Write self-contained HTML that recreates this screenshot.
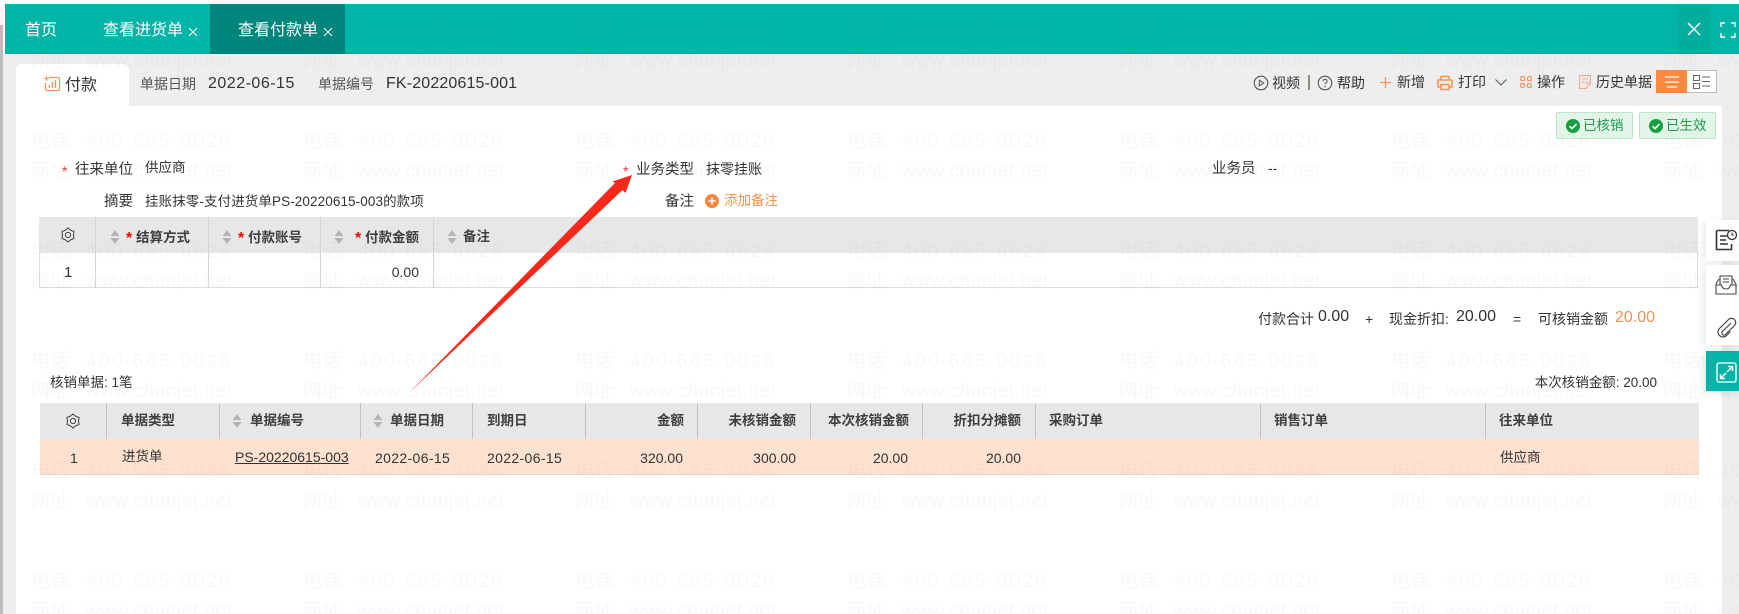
<!DOCTYPE html>
<html lang="zh">
<head>
<meta charset="utf-8">
<title>查看付款单</title>
<style>
html,body{margin:0;padding:0}
body{width:1739px;height:614px;position:relative;overflow:hidden;background:#fbfbfb;font-family:"Liberation Sans","Noto Sans CJK SC",sans-serif;font-size:14px;color:#333}
.b{position:absolute}
.t{position:absolute;white-space:nowrap;line-height:20px;height:20px}
.r{text-align:right}
.h{font-weight:700;color:#3f3f3f;font-size:13.5px}
.tab{color:#fff;font-size:16px}
.s{color:#f00;font-weight:700}
.v{position:absolute;width:1px}
svg{position:absolute;overflow:visible}
</style>
</head>
<body>
<!-- frame -->
<div class="b" style="left:0;top:25px;width:3px;height:589px;background:#bcbcbc"></div>
<div class="b" style="left:3px;top:54px;width:1736px;height:560px;background:#eeeeee"></div>
<div class="b" style="left:5px;top:4px;width:1734px;height:50px;background:#00b5a8"></div>
<div class="b" style="left:210px;top:4px;width:135px;height:50px;background:#00857c"></div>
<div class="b" style="left:1678px;top:4px;width:33px;height:50px;background:#00ae9f"></div>
<div class="t tab" style="left:25px;top:21px">首页</div>
<div class="t tab" style="left:103px;top:21px">查看进货单</div>
<div class="t tab" style="left:238px;top:21px">查看付款单</div>
<svg style="left:188px;top:27px" width="10" height="10"><path d="M1 1l8 8M9 1l-8 8" stroke="#fff" stroke-width="1"/></svg>
<svg style="left:323px;top:27px" width="10" height="10"><path d="M1 1l8 8M9 1l-8 8" stroke="#fff" stroke-width="1"/></svg>
<svg style="left:1688px;top:23px" width="12" height="12"><path d="M0 0l12 12M12 0L0 12" stroke="#fff" stroke-width="1.4"/></svg>
<svg style="left:1721px;top:23px" width="14" height="14"><path d="M0 4V0h4M10 0h4v4M14 10v4h-4M4 14H0v-4" fill="none" stroke="#fff" stroke-width="1.4"/></svg>

<!-- white content -->
<div class="b" style="left:16px;top:106px;width:1706px;height:508px;background:#fff"></div>
<div class="b" style="left:16px;top:64px;width:113px;height:42px;background:#fff;border-radius:6px 6px 0 0"></div>
<svg style="left:44px;top:76px" width="17" height="16"><path d="M5 1.500H14a1.500 1.500 0 0 1 1.500 1.500V13a1.500 1.500 0 0 1-1.500 1.500H3A1.500 1.500 0 0 1 1.500 13V7" fill="none" stroke="#f5935a" stroke-width="1.2"/><path d="M2.500 0v5M0 2.500h5" stroke="#f5935a" stroke-width="1.2"/><path d="M5.500 12V9M8.500 12V6M11.500 12V4" stroke="#f5935a" stroke-width="1.4"/></svg>
<div class="t" style="left:65px;top:76px;font-size:16px">付款</div>
<div class="t" style="left:140px;top:74px;color:#555">单据日期</div>
<div class="t" style="left:208px;top:74px;font-size:16px;letter-spacing:.5px">2022-06-15</div>
<div class="t" style="left:318px;top:74px;color:#555">单据编号</div>
<div class="t" style="left:386px;top:74px;font-size:16px;letter-spacing:.15px">FK-20220615-001</div>

<!-- toolbar -->
<svg style="left:1253px;top:75px" width="16" height="16"><circle cx="8" cy="8" r="6.800" fill="none" stroke="#555" stroke-width="1.100"/><path d="M6.300 5.200L10.800 8l-4.500 2.800z" fill="none" stroke="#555" stroke-width="1"/></svg>
<div class="t" style="left:1272px;top:73px">视频</div>
<div class="b" style="left:1308px;top:75px;width:2px;height:15px;background:#8f8f80"></div>
<svg style="left:1317px;top:75px" width="16" height="16"><circle cx="8" cy="8" r="6.800" fill="none" stroke="#555" stroke-width="1.100"/><path d="M6 6.300a2 2 0 1 1 3 1.700c-.7.4-1 .8-1 1.600" fill="none" stroke="#555" stroke-width="1"/><circle cx="8" cy="11.600" r=".7" fill="#555"/></svg>
<div class="t" style="left:1337px;top:73px">帮助</div>
<svg style="left:1380px;top:77px" width="11" height="11"><path d="M5.500 0v11M0 5.500h11" stroke="#f5935a" stroke-width="1.300"/></svg>
<div class="t" style="left:1397px;top:72px">新增</div>
<svg style="left:1437px;top:75px" width="16" height="16"><path d="M4 5V1.500h8V5M4 12H1V5h14v7h-3" fill="none" stroke="#f5935a" stroke-width="1.600" stroke-linejoin="round"/><path d="M4 9.500h8v5H4z" fill="none" stroke="#f5935a" stroke-width="1.600"/></svg>
<div class="t" style="left:1458px;top:72px">打印</div>
<svg style="left:1495px;top:79px" width="12" height="7"><path d="M.5.5L6 6l5.500-5.500" fill="none" stroke="#555" stroke-width="1"/></svg>
<svg style="left:1520px;top:76px" width="12" height="12"><g fill="none" stroke="#f5935a" stroke-width="1.100"><rect x=".6" y=".6" width="4" height="4" rx="1.400"/><rect x="7.400" y=".6" width="4" height="4" rx="1.400"/><rect x=".6" y="7.400" width="4" height="4" rx="1.400"/><rect x="7.400" y="7.400" width="4" height="4" rx="1.400"/></g></svg>
<div class="t" style="left:1537px;top:72px">操作</div>
<svg style="left:1579px;top:75px" width="12" height="14"><path d="M.6.6h10.800v8L7 13.400H.6z" fill="none" stroke="#f5a888" stroke-width="1.100"/><path d="M3 4h6M3 7h3.500M7 9.500l2-2 1.500 1.500" fill="none" stroke="#f5a888" stroke-width="1"/></svg>
<div class="t" style="left:1596px;top:72px">历史单据</div>
<div class="b" style="left:1656px;top:70px;width:61px;height:23px;box-sizing:border-box;border:1px solid #bbb;background:#fff"></div>
<div class="b" style="left:1656px;top:70px;width:31px;height:23px;background:#ff8a3d"></div>
<svg style="left:1665px;top:76px" width="14" height="12"><path d="M0 1h14M0 6h14M2 11h10" stroke="#fff" stroke-width="1.200"/></svg>
<svg style="left:1693px;top:75px" width="18" height="14"><g fill="none" stroke="#666" stroke-width="1"><rect x=".5" y=".5" width="6" height="5"/><rect x=".5" y="8.500" width="6" height="5"/><path d="M9 2h8M9 6.500h8M9 11h8"/></g></svg>

<!-- badges -->
<div class="b" style="left:1556px;top:112px;width:77px;height:27px;box-sizing:border-box;background:#e3f5e8;border:1px solid #bfe3cb;border-radius:2px"></div>
<div class="b" style="left:1639px;top:112px;width:77px;height:27px;box-sizing:border-box;background:#e3f5e8;border:1px solid #bfe3cb;border-radius:2px"></div>
<svg style="left:1566px;top:119px" width="14" height="14"><circle cx="7" cy="7" r="7" fill="#14a03f"/><path d="M3.500 7.200l2.500 2.400 4.500-4.600" fill="none" stroke="#fff" stroke-width="1.700"/></svg>
<svg style="left:1649px;top:119px" width="14" height="14"><circle cx="7" cy="7" r="7" fill="#14a03f"/><path d="M3.500 7.200l2.500 2.400 4.500-4.600" fill="none" stroke="#fff" stroke-width="1.700"/></svg>
<div class="t" style="left:1583px;top:116px;color:#1f9d4d;font-size:13.5px">已核销</div>
<div class="t" style="left:1666px;top:116px;color:#1f9d4d;font-size:13.5px">已生效</div>

<!-- form -->
<div class="t" style="left:62px;top:161px;color:#e33">*</div>
<div class="t" style="left:75px;top:160px;font-size:14.5px">往来单位</div>
<div class="t" style="left:145px;top:158px;font-size:13.5px">供应商</div>
<div class="t" style="left:104px;top:192px;font-size:14.5px">摘要</div>
<div class="t" style="left:145px;top:192px;font-size:13.5px;letter-spacing:.1px">挂账抹零-支付进货单PS-20220615-003的款项</div>
<div class="t" style="left:623px;top:161px;color:#e33">*</div>
<div class="t" style="left:636px;top:160px;font-size:14.5px">业务类型</div>
<div class="t" style="left:706px;top:159px">抹零挂账</div>
<div class="t" style="left:1212px;top:159px;font-size:14.5px">业务员</div>
<div class="t" style="left:1268px;top:158px">--</div>
<div class="t" style="left:665px;top:192px;font-size:14.5px">备注</div>
<svg style="left:705px;top:194px" width="14" height="14"><circle cx="7" cy="7" r="7" fill="#f5873f"/><path d="M7 3.500v7M3.500 7h7" stroke="#fff" stroke-width="1.500"/></svg>
<div class="t" style="left:724px;top:191px;color:#f0904f;font-size:13.5px">添加备注</div>

<svg width="0" height="0" style="left:0;top:0"><symbol id="g" viewBox="-8 -8 16 16" overflow="visible"><path d="M0-7L2.750-4.760 6.060-3.500 5.500 0 6.060 3.500 2.750 4.760 0 7-2.750 4.760-6.060 3.500-5.500 0-6.060-3.500-2.750-4.760z" fill="none" stroke="#444" stroke-width="1" stroke-linejoin="round"/><circle r="2.600" fill="none" stroke="#444" stroke-width="1"/></symbol></svg>

<!-- table 1 -->
<div class="b" style="left:39px;top:217px;width:1659px;height:36px;background:#e6e7e9"></div>
<div class="b" style="left:39px;top:253px;width:1659px;height:35px;box-sizing:border-box;border:1px solid #dddddd;border-top:0"></div>
<div class="v" style="left:95px;top:217px;height:71px;background:#d6d6d6"></div>
<div class="v" style="left:208px;top:217px;height:71px;background:#d6d6d6"></div>
<div class="v" style="left:320px;top:217px;height:71px;background:#d6d6d6"></div>
<div class="v" style="left:433px;top:217px;height:71px;background:#d6d6d6"></div>
<svg style="left:60px;top:227px" width="16" height="16"><use href="#g" width="16" height="16"/></svg>
<svg style="left:110px;top:230px" width="10" height="14"><path d="M5 0l4.500 6h-9zM5 14L.5 8h9z" fill="#b5b5b5"/></svg>
<svg style="left:222px;top:230px" width="10" height="14"><path d="M5 0l4.500 6h-9zM5 14L.5 8h9z" fill="#b5b5b5"/></svg>
<svg style="left:334px;top:230px" width="10" height="14"><path d="M5 0l4.500 6h-9zM5 14L.5 8h9z" fill="#b5b5b5"/></svg>
<svg style="left:447px;top:230px" width="10" height="14"><path d="M5 0l4.500 6h-9zM5 14L.5 8h9z" fill="#b5b5b5"/></svg>
<div class="t s" style="left:126px;top:229px;font-size:16px">*</div>
<div class="t h" style="left:136px;top:228px">结算方式</div>
<div class="t s" style="left:238px;top:229px;font-size:16px">*</div>
<div class="t h" style="left:248px;top:228px">付款账号</div>
<div class="t s" style="left:355px;top:229px;font-size:16px">*</div>
<div class="t h" style="left:365px;top:228px">付款金额</div>
<div class="t h" style="left:463px;top:227px">备注</div>
<div class="t" style="left:64px;top:263px;font-size:15px">1</div>
<div class="t r" style="right:1320px;top:262px">0.00</div>

<!-- totals -->
<div class="t" style="left:1258px;top:309px">付款合计</div>
<div class="t" style="left:1318px;top:307px;font-size:16px">0.00</div>
<div class="t" style="left:1365px;top:309px">+</div>
<div class="t" style="left:1389px;top:309px">现金折扣:</div>
<div class="t" style="left:1456px;top:307px;font-size:16px">20.00</div>
<div class="t" style="left:1513px;top:309px">=</div>
<div class="t" style="left:1538px;top:309px">可核销金额</div>
<div class="t" style="left:1615px;top:308px;font-size:16px;color:#f0905a">20.00</div>
<div class="t" style="left:50px;top:373px;font-size:13.5px">核销单据: 1笔</div>
<div class="t r" style="right:82px;top:373px;font-size:13.5px">本次核销金额: 20.00</div>

<!-- table 2 -->
<div class="b" style="left:40px;top:403px;width:1659px;height:36px;background:#e6e7e9"></div>
<div class="b" style="left:40px;top:439px;width:1659px;height:35px;background:#ffe1d0;border-bottom:1px solid #d8d8d8"></div>
<div class="v" style="left:106px;top:403px;height:36px;background:#c2c2c2"></div>
<div class="v" style="left:219px;top:403px;height:36px;background:#c2c2c2"></div>
<div class="v" style="left:360px;top:403px;height:36px;background:#c2c2c2"></div>
<div class="v" style="left:472px;top:403px;height:36px;background:#c2c2c2"></div>
<div class="v" style="left:585px;top:403px;height:36px;background:#c2c2c2"></div>
<div class="v" style="left:697px;top:403px;height:36px;background:#c2c2c2"></div>
<div class="v" style="left:810px;top:403px;height:36px;background:#c2c2c2"></div>
<div class="v" style="left:922px;top:403px;height:36px;background:#c2c2c2"></div>
<div class="v" style="left:1035px;top:403px;height:36px;background:#c2c2c2"></div>
<div class="v" style="left:1260px;top:403px;height:36px;background:#c2c2c2"></div>
<div class="v" style="left:1485px;top:403px;height:36px;background:#c2c2c2"></div>
<svg style="left:65px;top:413px" width="16" height="16"><use href="#g" width="16" height="16"/></svg>
<svg style="left:232px;top:414px" width="10" height="14"><path d="M5 0l4.500 6h-9zM5 14L.5 8h9z" fill="#b5b5b5"/></svg>
<svg style="left:373px;top:414px" width="10" height="14"><path d="M5 0l4.500 6h-9zM5 14L.5 8h9z" fill="#b5b5b5"/></svg>
<div class="t h" style="left:121px;top:411px">单据类型</div>
<div class="t h" style="left:250px;top:411px">单据编号</div>
<div class="t h" style="left:390px;top:411px">单据日期</div>
<div class="t h" style="left:487px;top:411px">到期日</div>
<div class="t h r" style="right:1055px;top:411px">金额</div>
<div class="t h r" style="right:943px;top:411px">未核销金额</div>
<div class="t h r" style="right:830px;top:411px">本次核销金额</div>
<div class="t h r" style="right:718px;top:411px">折扣分摊额</div>
<div class="t h" style="left:1049px;top:411px">采购订单</div>
<div class="t h" style="left:1274px;top:411px">销售订单</div>
<div class="t h" style="left:1499px;top:411px">往来单位</div>
<div class="t" style="left:70px;top:448px">1</div>
<div class="t" style="left:122px;top:447px;font-size:13.5px">进货单</div>
<div class="t" style="left:235px;top:447px;text-decoration:underline">PS-20220615-003</div>
<div class="t" style="left:375px;top:448px;letter-spacing:.35px">2022-06-15</div>
<div class="t" style="left:487px;top:448px;letter-spacing:.35px">2022-06-15</div>
<div class="t r" style="right:1056px;top:448px">320.00</div>
<div class="t r" style="right:943px;top:448px">300.00</div>
<div class="t r" style="right:831px;top:448px">20.00</div>
<div class="t r" style="right:718px;top:448px">20.00</div>
<div class="t" style="left:1500px;top:448px;font-size:13.5px">供应商</div>

<!-- right side panel -->
<div class="b" style="left:1706px;top:220px;width:33px;height:41px;background:#fff;box-shadow:-3px 2px 8px rgba(0,0,0,.08)"></div>
<div class="b" style="left:1706px;top:265px;width:33px;height:80px;background:#fff;box-shadow:-3px 2px 8px rgba(0,0,0,.08)"></div>
<div class="b" style="left:1706px;top:351px;width:33px;height:40px;background:#00b5a8;box-shadow:-3px 2px 8px rgba(0,0,0,.1)"></div>
<svg style="left:1715px;top:229px" width="23" height="23"><path d="M14 1.500H2.500a1 1 0 0 0-1 1v18h15V15" fill="none" stroke="#333" stroke-width="1.600"/><path d="M5 7h7M5 11h6M5 15h8" stroke="#333" stroke-width="1.500"/><circle cx="17" cy="6" r="4.500" fill="#fff" stroke="#333" stroke-width="1.300"/><path d="M17 3.500V6h2" fill="none" stroke="#333" stroke-width="1"/></svg>
<svg style="left:1715px;top:274px" width="22" height="22"><path d="M5 11V2h12v9" fill="none" stroke="#444" stroke-width="1.100"/><path d="M8 5h6M8 8h6" stroke="#444" stroke-width="1.100"/><path d="M4 5L1 10v10h20V10l-3-5" fill="none" stroke="#444" stroke-width="1.100"/><path d="M1 11h5.500c.5 3 2 4 4.500 4s4-1 4.500-4H21" fill="none" stroke="#444" stroke-width="1.100"/></svg>
<svg style="left:1716px;top:317px" width="21" height="21"><path d="M14.500 6.500L6.500 14.500a2 2 0 0 0 3 3L18.500 8.500a4.200 4.200 0 0 0-6-6L3 12a5 5 0 0 0 7 7l4-4" fill="none" stroke="#444" stroke-width="1.200" stroke-linecap="round"/></svg>
<svg style="left:1716px;top:362px" width="21" height="21"><rect x="1" y="1" width="19" height="19" rx="2" fill="none" stroke="#d8f5f0" stroke-width="1.600"/><path d="M12 4.500h4.500V9M16.500 4.500L11 10M9 16.500H4.500V12M4.500 16.500L10 11" fill="none" stroke="#fff" stroke-width="1.500"/></svg>

<!-- annotation arrow -->
<svg style="left:0;top:0" width="1739" height="614"><polygon points="632,175 625.500,193 622.500,190 409,393 615,183 612.500,181.500" fill="#f8281b"/></svg>

<!-- watermark -->
<svg style="left:0;top:0;pointer-events:none" width="1739" height="614">
<defs><pattern id="w" patternUnits="userSpaceOnUse" x="31" y="20" width="272" height="110">
<g font-family="Liberation Sans,Noto Sans CJK SC,sans-serif" font-size="19" fill="#808080" fill-opacity=".055">
<text x="0" y="17">电话:</text><text x="55" y="17" letter-spacing="2.300">400-665-0028</text>
<text x="0" y="47">网址:</text><text x="55" y="47" letter-spacing=".55">www.chanjet.net</text>
</g></pattern></defs>
<rect width="1739" height="614" fill="url(#w)"/>
</svg>
</body>
</html>
